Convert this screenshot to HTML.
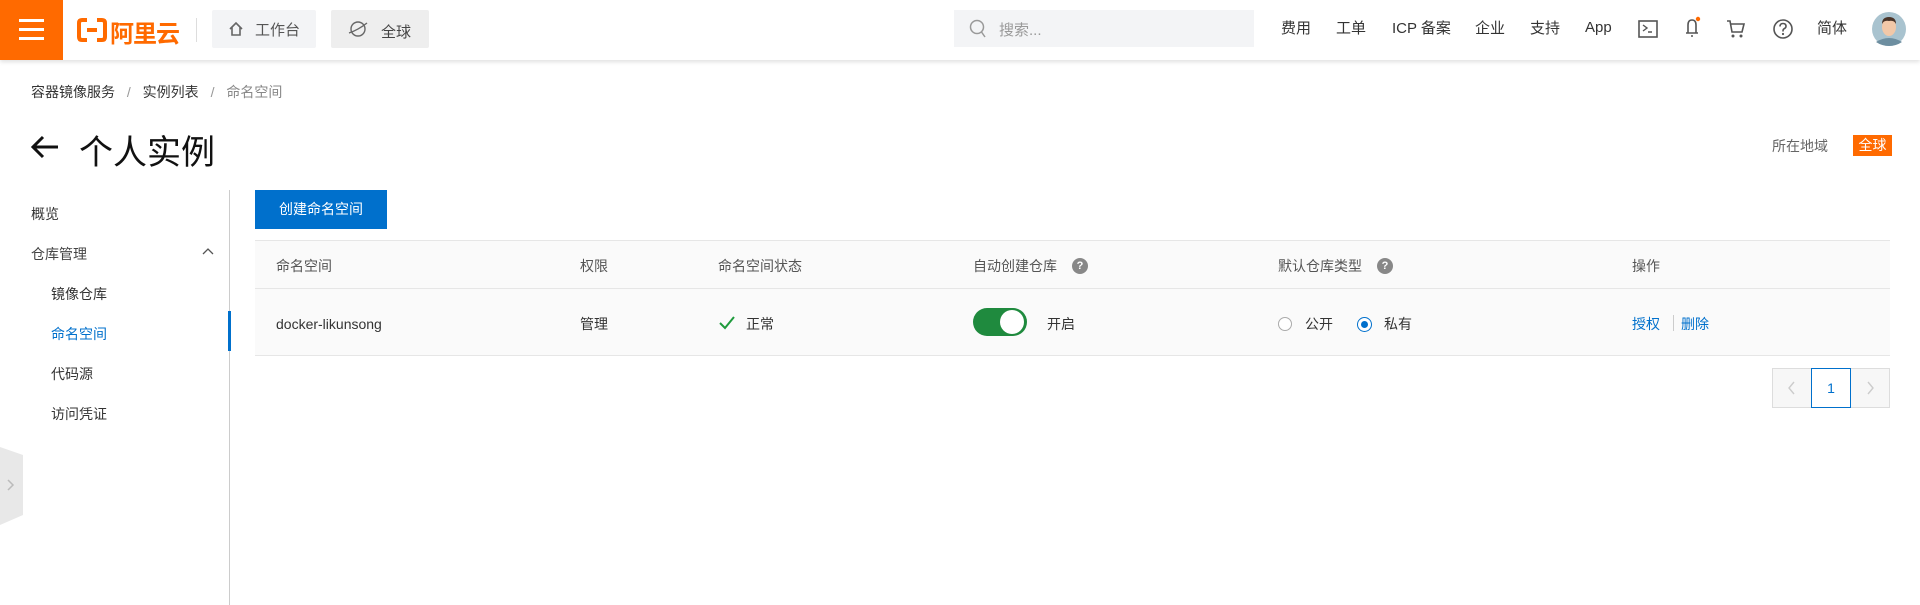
<!DOCTYPE html>
<html><head><meta charset="utf-8"><style>
*{margin:0;padding:0;box-sizing:border-box}
body{width:1920px;height:605px;overflow:hidden;background:#fff;font-family:"Liberation Sans","Noto Sans CJK SC",sans-serif;font-size:14px;color:#333;position:relative}
.a{position:absolute;white-space:nowrap}
.hdr{position:absolute;left:0;top:0;width:1920px;height:60px;background:#fff;box-shadow:0 2px 4px rgba(0,0,0,.12)}
.nav{top:17px;font-size:15px;color:#333}
.th{top:256px;color:#555}
.td{top:314px;color:#333}
</style></head><body>
<div class="hdr">
 <div class="a" style="left:0;top:0;width:63px;height:60px;background:#ff6a00">
  <div class="a" style="left:19px;top:19px;width:25px;height:3px;background:#fff"></div>
  <div class="a" style="left:19px;top:28px;width:25px;height:3px;background:#fff"></div>
  <div class="a" style="left:19px;top:37px;width:25px;height:3px;background:#fff"></div>
 </div>
 <svg class="a" style="left:77px;top:18px" width="30" height="24" viewBox="0 0 30 24"><path d="M10 2H5Q2 2 2 5V19Q2 22 5 22H10M20 2H25Q28 2 28 5V19Q28 22 25 22H20M10 12H20" fill="none" stroke="#ff6a00" stroke-width="4"/></svg>
 <div class="a" style="left:110px;top:14px;font-size:24px;font-weight:bold;color:#ff6a00;letter-spacing:-1px">阿里云</div>
 <div class="a" style="left:196px;top:18px;width:1px;height:24px;background:#ddd"></div>
 <div class="a" style="left:212px;top:10px;width:104px;height:38px;background:#f3f4f6;border-radius:2px"></div>
 <svg class="a" style="left:228px;top:21px" width="16" height="16" viewBox="0 0 16 16"><path d="M2 8L8 2L14 8M4 6V14H12V6" fill="none" stroke="#666" stroke-width="1.6"/></svg>
 <div class="a" style="left:255px;top:19px;font-size:15px;color:#555">工作台</div>
 <div class="a" style="left:331px;top:10px;width:98px;height:38px;background:#eee;border-radius:2px"></div>
 <svg class="a" style="left:347px;top:18px" width="22" height="22" viewBox="0 0 22 22"><circle cx="11" cy="11" r="7" fill="none" stroke="#666" stroke-width="1.4"/><path d="M2 15Q11 12 20 5" fill="none" stroke="#666" stroke-width="1.4"/></svg>
 <div class="a" style="left:381px;top:21px;font-size:15px;color:#444">全球</div>
 <div class="a" style="left:954px;top:10px;width:300px;height:37px;background:#f3f4f6"></div>
 <svg class="a" style="left:969px;top:19px" width="18" height="20" viewBox="0 0 18 20"><circle cx="8" cy="8" r="6.5" fill="none" stroke="#999" stroke-width="1.5"/><path d="M12.5 13L16 18" stroke="#999" stroke-width="1.5"/></svg>
 <div class="a" style="left:999px;top:19px;font-size:15px;color:#999">搜索...</div>
 <div class="a nav" style="left:1281px">费用</div>
 <div class="a nav" style="left:1336px">工单</div>
 <div class="a nav" style="left:1392px">ICP 备案</div>
 <div class="a nav" style="left:1475px">企业</div>
 <div class="a nav" style="left:1530px">支持</div>
 <div class="a nav" style="left:1585px;top:19px">App</div>
 <svg class="a" style="left:1638px;top:20px" width="20" height="18" viewBox="0 0 20 18"><rect x="1" y="1" width="18" height="16" fill="none" stroke="#555" stroke-width="1.6"/><path d="M5 5L9 8L5 11M10 12H14" fill="none" stroke="#555" stroke-width="1.4"/></svg>
 <svg class="a" style="left:1683px;top:16px" width="20" height="24" viewBox="0 0 20 24"><path d="M5 17V9Q5 4 9 4Q13 4 13 9V17ZM3 17H15M8 20H10" fill="none" stroke="#555" stroke-width="1.6"/><circle cx="15" cy="3" r="2.2" fill="#ff6a00"/></svg>
 <svg class="a" style="left:1726px;top:19px" width="20" height="20" viewBox="0 0 20 20"><path d="M1 2H4L6 13H16L18 5H5" fill="none" stroke="#555" stroke-width="1.6"/><circle cx="7" cy="17" r="1.5" fill="#555"/><circle cx="15" cy="17" r="1.5" fill="#555"/></svg>
 <svg class="a" style="left:1772px;top:18px" width="22" height="22" viewBox="0 0 22 22"><circle cx="11" cy="11" r="9" fill="none" stroke="#555" stroke-width="1.6"/><path d="M8 8.5Q8 5.5 11 5.5Q14 5.5 14 8.3Q14 10 11.5 11.2Q11 11.6 11 13.5" fill="none" stroke="#555" stroke-width="1.6"/><circle cx="11" cy="16" r="1.1" fill="#555"/></svg>
 <div class="a nav" style="left:1817px">简体</div>
 <svg class="a" style="left:1872px;top:12px" width="34" height="34" viewBox="0 0 34 34"><circle cx="17" cy="17" r="17" fill="#a9c3cf"/><path d="M4 30Q17 22 30 30Q24 34 17 34Q10 34 4 30Z" fill="#6d8ea0"/><ellipse cx="17" cy="15" rx="7" ry="9" fill="#f2c8a8"/><path d="M10 12Q10 5 17 5Q24 5 24 12Q22 8 17 9Q12 8 10 12Z" fill="#4a3428"/></svg>
</div>

<div class="a" style="left:31px;top:82px;font-size:14px;color:#333">容器镜像服务 <span style="color:#999;margin:0 8px">/</span> 实例列表 <span style="color:#999;margin:0 8px">/</span> <span style="color:#888">命名空间</span></div>
<svg class="a" style="left:30px;top:135px" width="30" height="24" viewBox="0 0 30 24"><path d="M28 12H3M13 2L3 12L13 22" fill="none" stroke="#111" stroke-width="3"/></svg>
<div class="a" style="left:79px;top:125px;font-size:34px;color:#111">个人实例</div>
<div class="a" style="left:1772px;top:136px;font-size:14px;color:#666">所在地域</div>
<div class="a" style="left:1853px;top:135px;width:39px;height:21px;background:#ff6a00;color:#fff;font-size:14px;text-align:center;line-height:21px">全球</div>

<div class="a" style="left:229px;top:190px;width:1px;height:415px;background:#ccc"></div>
<div class="a" style="left:31px;top:204px">概览</div>
<div class="a" style="left:31px;top:244px;color:#444">仓库管理</div>
<svg class="a" style="left:201px;top:246px" width="14" height="10" viewBox="0 0 14 10"><path d="M2 8L7 3L12 8" fill="none" stroke="#555" stroke-width="1.3"/></svg>
<div class="a" style="left:51px;top:284px">镜像仓库</div>
<div class="a" style="left:51px;top:324px;color:#0070cc">命名空间</div>
<div class="a" style="left:228px;top:311px;width:3px;height:40px;background:#0070cc"></div>
<div class="a" style="left:51px;top:364px">代码源</div>
<div class="a" style="left:51px;top:404px">访问凭证</div>
<svg class="a" style="left:0;top:447px" width="24" height="78" viewBox="0 0 24 78"><path d="M0 0L23 8V68L0 78Z" fill="#e8e8e8"/><path d="M8 33L13 38L8 43" fill="none" stroke="#bbb" stroke-width="1.5"/></svg>

<div class="a" style="left:255px;top:190px;width:132px;height:39px;background:#0070cc;color:#fff;font-size:14px;text-align:center;line-height:39px">创建命名空间</div>

<div class="a" style="left:255px;top:240px;width:1635px;height:116px;background:#fafafa;border-top:1px solid #e6e6e6;border-bottom:1px solid #e6e6e6"></div>
<div class="a" style="left:255px;top:288px;width:1635px;height:1px;background:#e6e6e6"></div>
<div class="a th" style="left:276px">命名空间</div>
<div class="a th" style="left:580px">权限</div>
<div class="a th" style="left:718px">命名空间状态</div>
<div class="a th" style="left:973px">自动创建仓库</div>
<div class="a" style="left:1072px;top:258px;width:16px;height:16px;border-radius:50%;background:#888;color:#fff;font-size:11px;font-weight:bold;text-align:center;line-height:16px">?</div>
<div class="a th" style="left:1278px">默认仓库类型</div>
<div class="a" style="left:1377px;top:258px;width:16px;height:16px;border-radius:50%;background:#888;color:#fff;font-size:11px;font-weight:bold;text-align:center;line-height:16px">?</div>
<div class="a th" style="left:1632px">操作</div>

<div class="a td" style="left:276px;top:316px">docker-likunsong</div>
<div class="a td" style="left:580px">管理</div>
<svg class="a" style="left:718px;top:315px" width="18" height="16" viewBox="0 0 18 16"><path d="M2 8L7 13L16 2" fill="none" stroke="#1e9b3c" stroke-width="2"/></svg>
<div class="a td" style="left:746px">正常</div>
<div class="a" style="left:973px;top:308px;width:54px;height:28px;border-radius:14px;background:#1f8a3e"></div>
<div class="a" style="left:1000px;top:310px;width:24px;height:24px;border-radius:50%;background:#fff"></div>
<div class="a td" style="left:1047px;top:314px">开启</div>
<div class="a" style="left:1278px;top:317px;width:14px;height:14px;border-radius:50%;border:1px solid #aaa;background:#fff"></div>
<div class="a td" style="left:1305px">公开</div>
<div class="a" style="left:1357px;top:317px;width:15px;height:15px;border-radius:50%;border:1.5px solid #0070cc;background:#fff"></div>
<div class="a" style="left:1361px;top:321px;width:7px;height:7px;border-radius:50%;background:#0070cc"></div>
<div class="a td" style="left:1384px">私有</div>
<div class="a td" style="left:1632px;color:#0070cc">授权</div>
<div class="a" style="left:1673px;top:315px;width:1px;height:16px;background:#ccc"></div>
<div class="a td" style="left:1681px;color:#0070cc">删除</div>

<div class="a" style="left:1772px;top:368px;width:118px;height:40px;border:1px solid #ddd;background:#f7f7f7"></div>
<div class="a" style="left:1811px;top:368px;width:40px;height:40px;border:1px solid #0070cc;background:#fff;text-align:center;line-height:38px;color:#0070cc">1</div>
<svg class="a" style="left:1786px;top:380px" width="12" height="16" viewBox="0 0 12 16"><path d="M8 2L3 8L8 14" fill="none" stroke="#ccc" stroke-width="1.4"/></svg>
<svg class="a" style="left:1864px;top:380px" width="12" height="16" viewBox="0 0 12 16"><path d="M4 2L9 8L4 14" fill="none" stroke="#ccc" stroke-width="1.4"/></svg>
</body></html>
